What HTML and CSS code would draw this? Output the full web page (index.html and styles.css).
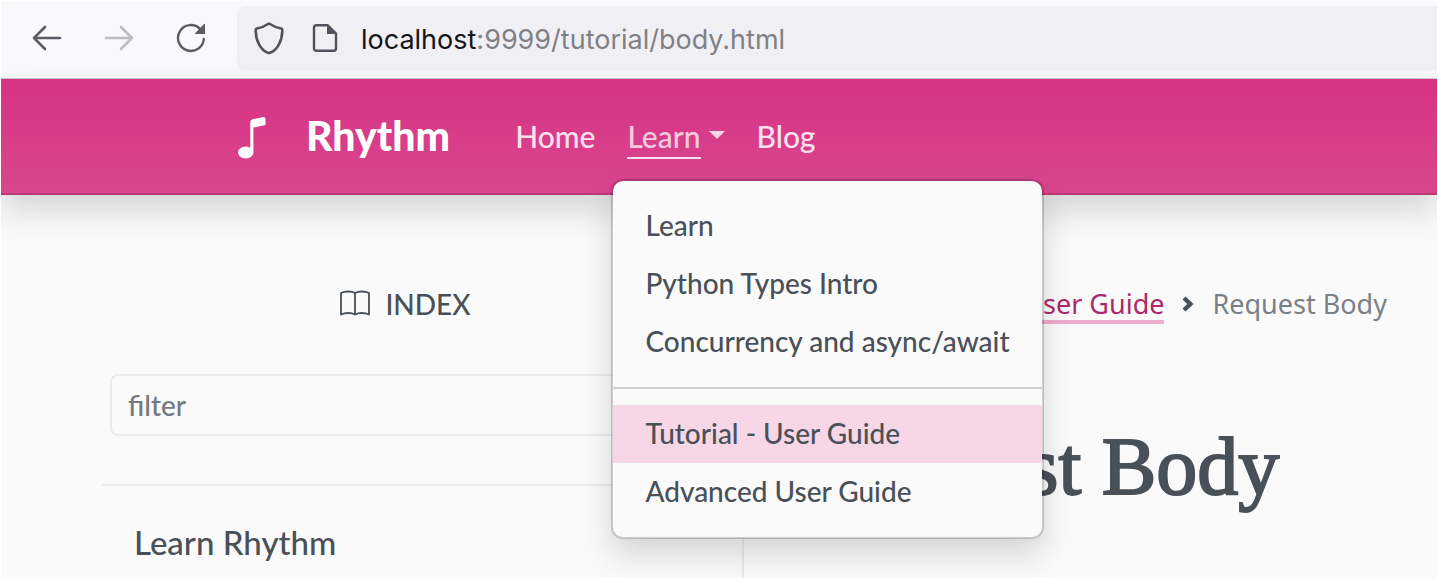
FILE: index.html
```html
<!DOCTYPE html>
<html lang="en">
<head>
<meta charset="utf-8">
<title>Rhythm</title>
<link rel="stylesheet" href="styles.css">
</head>
<body>
<div class="page">
  <header class="browser">
    <button class="tool" aria-label="Back"><svg width="32" height="32" viewBox="0 0 32 32" fill="none" stroke="#5b5b66" stroke-width="2.6" stroke-linecap="round" stroke-linejoin="round"><path d="M29 16H3M14 5 3 16l11 11"/></svg></button>
    <button class="tool" aria-label="Forward" disabled><svg width="32" height="32" viewBox="0 0 32 32" fill="none" stroke="#bcbcc0" stroke-width="2.6" stroke-linecap="round" stroke-linejoin="round"><path d="M3 16h26M18 5l11 11-11 11"/></svg></button>
    <button class="tool" aria-label="Reload"><svg width="32" height="32" viewBox="0 0 32 32" fill="none" stroke="#5b5b66" stroke-width="2.4" stroke-linecap="round"><path d="M28.800 17A12.900 12.900 0 1 1 25 6.800"/><path d="M30 2v10H20.500q-.8-.4-.2-1L28.800 2.200Q29.600 1.600 30 2z" fill="#5b5b66" stroke="none"/></svg></button>
    <div class="address">
      <svg width="32" height="34" viewBox="0 0 32 34" fill="none" stroke="#52525e" stroke-width="2.600" stroke-linejoin="round"><path d="M16 2.500Q22 6.500 28.200 7.500Q29.600 8 29.300 10C29 20 24.500 29 17 31.800Q16 32.200 15 31.800C7.500 29 3 20 2.700 10Q2.400 8 3.800 7.500Q10 6.500 16 2.500z"/></svg>
      <svg width="26" height="30" viewBox="0 0 26 30" fill="none" stroke="#52525e" stroke-width="2.400" stroke-linejoin="round"><path d="M15.500 2.200H4.500A2.500 2.500 0 0 0 2 4.700v20.600a2.500 2.500 0 0 0 2.500 2.500h17a2.500 2.500 0 0 0 2.500-2.500V10.500z"/><path d="M15 1v10h10z" fill="#52525e" stroke="none"/></svg>
      <span class="url"><span class="host">localhost</span>:9999/tutorial/body.html</span>
    </div>
  </header>

  <nav class="navbar">
    <a class="brand" href="#"><svg width="28" height="46" viewBox="0 -4 28 46" fill="#fff"><ellipse cx="7.700" cy="35.500" rx="7.700" ry="5.900"/><path d="M12.300 35.500V5q0-2.300 2.300-2.800L24.500.200Q27.500-.300 27.500 2.500V8L15.400 10.600V35.500z"/></svg><span>Rhythm</span></a>
    <a class="link" href="#">Home</a>
    <div class="dropdown">
      <button class="link toggle" aria-expanded="true"><span>Learn</span></button>
      <ul class="menu">
        <li><a href="#">Learn</a></li>
        <li><a href="#">Python Types Intro</a></li>
        <li><a href="#">Concurrency and async/await</a></li>
        <li class="divider"></li>
        <li><a class="active" href="#">Tutorial - User Guide</a></li>
        <li><a href="#">Advanced User Guide</a></li>
      </ul>
    </div>
    <a class="link" href="#">Blog</a>
  </nav>

  <div class="content">
    <aside class="sidebar">
      <div class="index"><svg width="32" height="28" viewBox="0 0 32 28" fill="none" stroke="#495057" stroke-width="1.800" stroke-linejoin="round"><path d="M16 3C12.500 1 6 1 2 3v21.500c4-2 10.500-2 14 0 3.500-2 10-2 14 0V3c-4-2-10.500-2-14 0zM16 3V24.500"/></svg><span>INDEX</span></div>
      <input class="filter" type="text" placeholder="filter" aria-label="filter">
      <h2 class="section">Learn Rhythm</h2>
    </aside>
    <main class="main">
      <div class="crumbs">
        <a href="#">Tutorial - User Guide</a>
        <svg width="12" height="16" viewBox="0 0 12 16" fill="none" stroke="#495057" stroke-width="4.400"><path d="M2 2 8.400 8 2 14"/></svg>
        <span>Request Body</span>
      </div>
      <h1 class="title">Request Body</h1>
    </main>
  </div>
</div>
</body>
</html>
```
FILE: styles.css
```css
* { box-sizing: border-box; }
body {
  margin: 0;
  padding: 1px;
  background: #fff;
  color: #495057;
  font: 500 28px/42px "Lato", sans-serif;
}
button { font: inherit; border: 0; padding: 0; background: none; }
a { color: inherit; text-decoration: none; }
svg { display: block; flex: none; }
.page { background: #fafafa; height: calc(100vh - 2px); overflow: hidden; display: flex; flex-direction: column; }

.browser {
  flex: none;
  display: flex;
  align-items: center;
  height: 78px;
  padding: 0 0 3px 30px;
  gap: 40px;
  background: #f9f9fb;
  border-bottom: 1px solid #ccc;
}
.address {
  flex: 1;
  display: flex;
  align-items: center;
  height: 64px;
  margin-left: -10px;
  padding-left: 16px;
  border-radius: 8px 0 0 8px;
  background: #f0eff4;
}
.address svg + svg { margin: 0 23px 0 27px; }
.url { padding-top: 4px; font: 400 27px/42px "Inter", sans-serif; color: #808086; white-space: nowrap; }
.host { color: #15141a; }

.navbar {
  flex: none;
  position: relative;
  z-index: 1;
  display: flex;
  align-items: center;
  height: 116px;
  padding-left: 237px;
  background: linear-gradient(#d63384, #da468f);
  border-bottom: 2px solid #b93a78;
  box-shadow: 0 16px 32px rgba(0, 0, 0, .15);
}
.brand { display: flex; align-items: center; gap: 40px; margin-right: 65px; color: #fff; font-size: 41px; font-weight: 900; }
.link { color: #fbe0ed; font-size: 30px; }
.dropdown { position: relative; margin: 0 32px; }
.toggle { display: flex; gap: 8px; padding-top: 2px; color: #f6cbe0; }
.toggle span { border-bottom: 2px solid #fbe0ed; }
.toggle::after { content: ""; margin-top: 16px; border: 8px solid transparent; border-top-color: #f9d6e6; border-bottom: 0; align-self: flex-start; }
.menu {
  position: absolute;
  top: 66px;
  left: -16px;
  min-width: 432px;
  margin: 0;
  padding: 16px 0;
  list-style: none;
  white-space: nowrap;
  color: #495057;
  background: #fafafa;
  background-clip: padding-box;
  border: 2px solid rgba(0, 0, 0, .175);
  border-radius: 12px;
  box-shadow: 0 16px 32px rgba(0, 0, 0, .15);
}
.menu a { display: block; padding: 7px 32px 9px; }
.menu .active { background: #f7d6e6; }
.divider { height: 2px; margin: 16px 0; background: #cfcfcf; }

.content { flex: 1; display: flex; padding-left: 101px; }
.sidebar { flex: none; width: 642px; padding-top: 88px; border-right: 2px solid #e9ecef; }
.index { display: flex; justify-content: center; gap: 14px; align-items: center; margin-right: 34px; }
.filter {
  display: block;
  width: calc(100% - 16px);
  height: 62px;
  margin: 49px 8px 48px;
  padding: 0 16px;
  border: 2px solid #e9ecef;
  border-radius: 8px;
  background: #fafafa;
  font: inherit;
}
.filter::placeholder { color: #747a80; opacity: 1; }
.section { margin: 0; padding: 35px 32px; border-top: 2px solid #e9ecef; font-size: 33px; font-weight: 500; }
.main { flex: 1; padding: 88px 50px 0 73px; white-space: nowrap; }
.crumbs { display: flex; justify-content: flex-end; align-items: center; gap: 18px; font-family: "Noto Sans", sans-serif; font-size: 27px; font-weight: 400; color: #7a8087; }
.crumbs a { padding-top: 4px; line-height: 32px; color: #ab296a; border-bottom: 4px solid #efadce; }
.title { margin: 94px 0 0; font: 400 82px/96px "Liberation Serif", serif; -webkit-text-stroke: 2px #495057; }
```
